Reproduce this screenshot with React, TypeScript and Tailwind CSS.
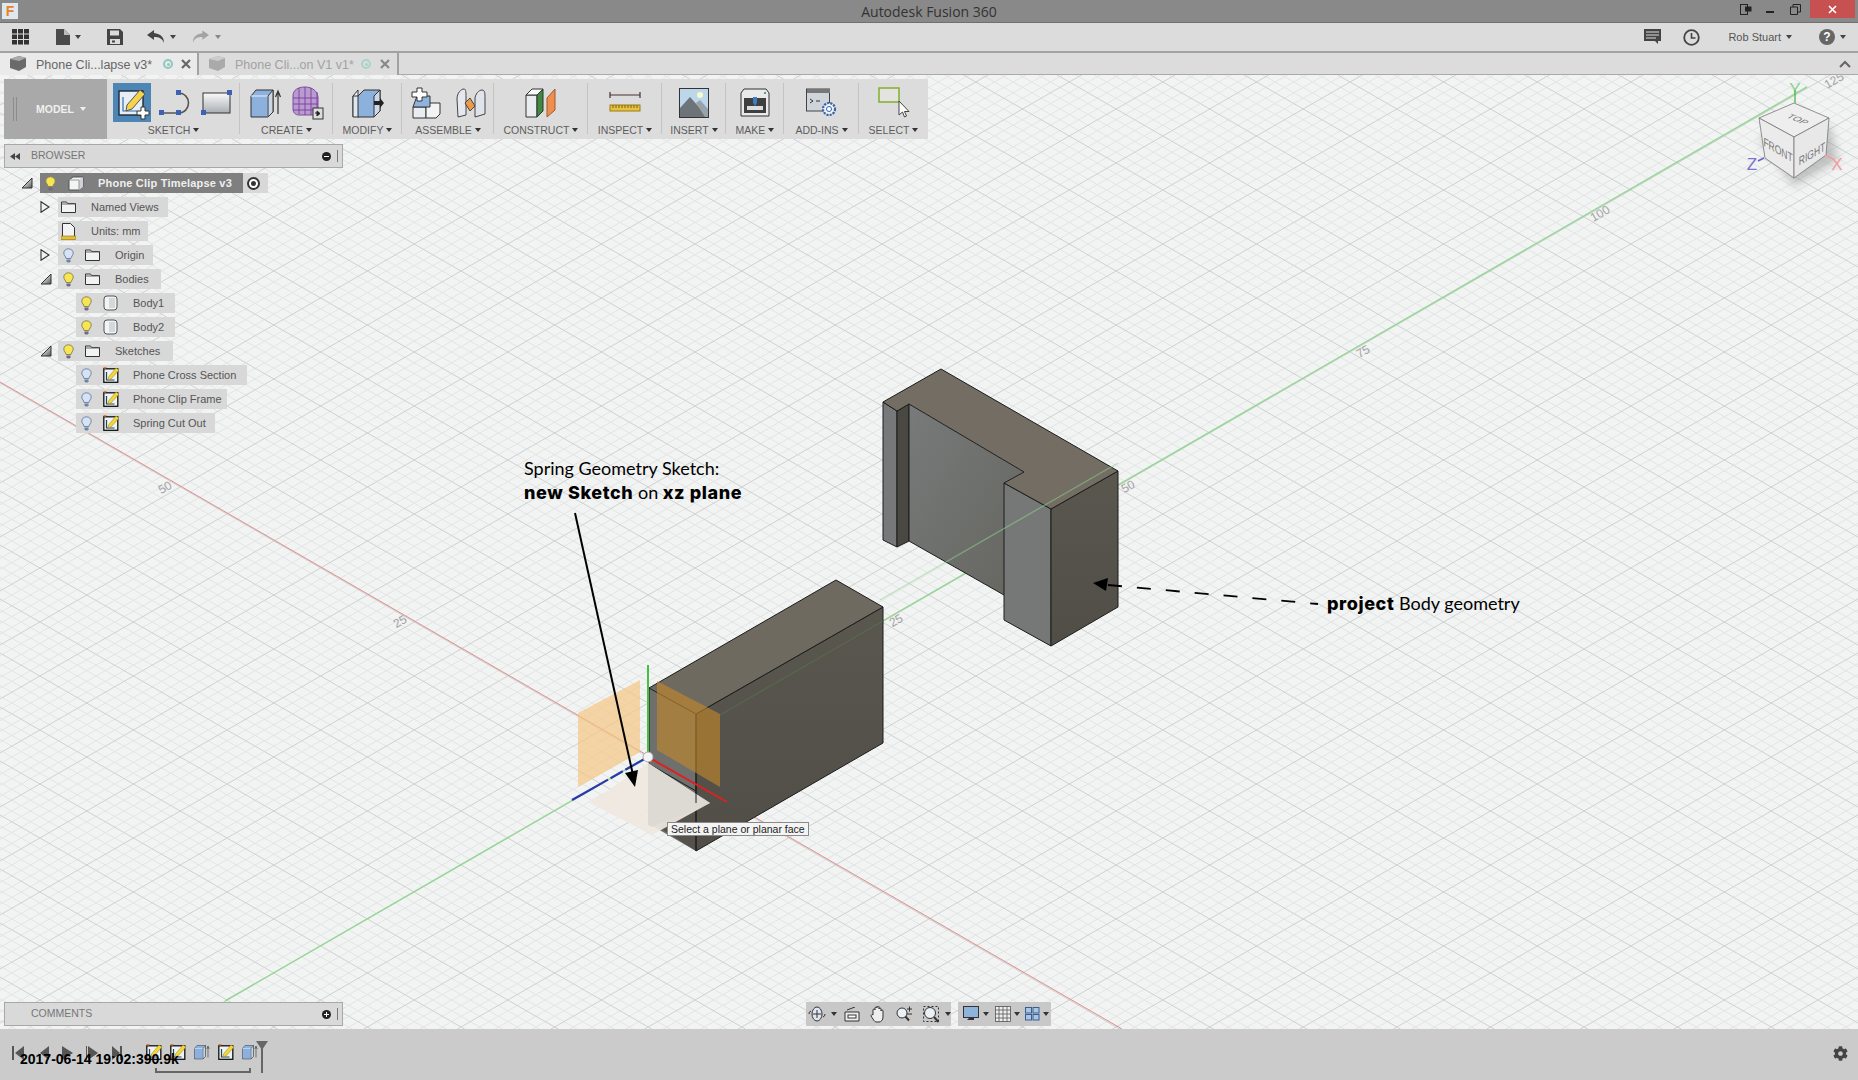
import React from 'react';
import { FaCog } from 'react-icons/fa';

const Caret = ({ className = 'border-t-[#444]' }: { className?: string }) => (
  <span className={`inline-block w-0 h-0 border-x-[3.5px] border-x-transparent border-t-[4px] ${className}`} />
);

// ---- ribbon icons ----
const SketchIcon = () => (
  <svg width="38" height="39" viewBox="0 0 38 39">
    <rect width="38" height="39" fill="#4d86b5" />
    <rect x="6" y="8" width="24" height="24" fill="#e8eef5" stroke="#1c2a3a" strokeWidth="1.4" />
    <path d="M10 14v14h14" fill="none" stroke="#2f6fb5" strokeWidth="1.2" />
    <path d="M14 22l13-15 5 4-13 15-6 2z" fill="#f5d34a" stroke="#555" strokeWidth="1" />
    <path d="M28 24h4v4h4v4h-4v4h-4v-4h-4v-4h4z" fill="#fff" stroke="#333" strokeWidth="1" />
  </svg>
);
const LineIcon = () => (
  <svg width="34" height="28" viewBox="0 0 34 28">
    <path d="M3 24h16c14 0 14-20 0-20" fill="none" stroke="#555" strokeWidth="1.6" />
    <g fill="#3e62b3">
      <rect x="0" y="21" width="5" height="5" />
      <rect x="17" y="21" width="5" height="5" />
      <rect x="17" y="1" width="5" height="5" />
    </g>
  </svg>
);
const RectIcon = () => (
  <svg width="32" height="26" viewBox="0 0 32 26">
    <defs>
      <linearGradient id="rg" x1="0" y1="0" x2="0" y2="1">
        <stop offset="0" stopColor="#fafafa" />
        <stop offset="1" stopColor="#a9aeb4" />
      </linearGradient>
    </defs>
    <rect x="2" y="3" width="27" height="20" fill="url(#rg)" stroke="#333" />
    <rect x="26" y="0" width="5" height="5" fill="#3e62b3" />
    <rect x="0" y="20" width="5" height="5" fill="#3e62b3" />
  </svg>
);
const ExtrudeIcon = ({ w = 32, h = 32 }: { w?: number; h?: number }) => (
  <svg width={w} height={h} viewBox="0 0 32 32">
    <path d="M1 9l5-6h17v22l-5 5H1z" fill="#8db1dd" stroke="#333" />
    <path d="M1 9h17v21" fill="none" stroke="#eef" />
    <path d="M18 9l5-6v22l-5 5z" fill="#c9d6e6" stroke="#333" />
    <path d="M28 27V6M25.500 10L28 4l2.500 6" fill="none" stroke="#333" strokeWidth="1.2" />
  </svg>
);
const FormIcon = () => (
  <svg width="32" height="34" viewBox="0 0 32 34">
    <path d="M1 10c0-6 5-9 12-9s13 4 13 11v13c0 3-2 4-5 4H7c-4 0-6-3-6-6z" fill="#b99bd0" stroke="#7a4c9b" />
    <path d="M1 12h25M1 18h25M1 24h24M7 2v26M13 1v28M19 2v27M25 6v22" stroke="#7a3f9e" strokeWidth="0.9" fill="none" />
    <rect x="21" y="22" width="10" height="11" fill="#ddd" stroke="#333" />
    <path d="M23 27h4M25 25l3 2.500-3 2.500z" fill="#222" stroke="#222" />
  </svg>
);
const ModifyIcon = () => (
  <svg width="32" height="32" viewBox="0 0 32 32">
    <path d="M1 9l5-6v22l-5 5z" fill="#eef1f4" stroke="#333" />
    <path d="M1 9h6v21H1z" fill="#dfe6ee" stroke="#333" />
    <path d="M6 9l6-6h16v21l-6 6H6z" fill="#8db1dd" stroke="#333" />
    <path d="M22 9l6-6v21l-6 6z" fill="#cdd9e8" stroke="#333" />
    <path d="M22 14h6v-3l4 5-4 5v-3h-6z" fill="#222" />
  </svg>
);
const AssembleIcon = () => (
  <svg width="30" height="32" viewBox="0 0 30 32">
    <path d="M2 20h13v11H2z" fill="#e9edf1" stroke="#333" />
    <path d="M15 20l4-4h10v11l-4 4H15z" fill="#f1f3f5" stroke="#333" />
    <path d="M6 9h13v11H2z" fill="#8fb3dc" stroke="#333" />
    <path d="M6 1h5v4h5v5h-5v4H6v-4H1V5h5z" fill="#fff" stroke="#333" />
  </svg>
);
const JointIcon = () => (
  <svg width="30" height="32" viewBox="0 0 30 32">
    <path d="M1 12c0-6 4-10 7-10 2 0 2 4 2 8v18l-8 2z" fill="#e5e8ec" stroke="#444" />
    <path d="M19 12c0-5 4-9 7-9s3 4 3 8v16l-10 3z" fill="#dfe4ea" stroke="#444" />
    <path d="M9 16l5-5 5 8-5 5z" fill="#ef9a4a" stroke="#444" />
  </svg>
);
const ConstructIcon = () => (
  <svg width="32" height="30" viewBox="0 0 32 30">
    <path d="M1 7h11v22H1z" fill="#e9edf0" stroke="#333" />
    <path d="M1 7l6-6h11l-6 6z" fill="#fafafa" stroke="#333" />
    <path d="M12 7l6-6v22l-6 6z" fill="#3f8a40" stroke="#333" />
    <path d="M22 10l8-9v21l-8 7z" fill="#ee8e4f" stroke="#a35a2a" />
  </svg>
);
const InspectIcon = () => (
  <svg width="32" height="24" viewBox="0 0 32 24">
    <path d="M1 1v6M31 1v6M1 4h30" stroke="#4a3030" strokeWidth="1.2" fill="none" />
    <rect x="1" y="14" width="30" height="6" fill="#e8c23a" stroke="#9a7d1a" />
    <path d="M4 14v3M7 14v3M10 14v3M13 14v3M16 14v3M19 14v3M22 14v3M25 14v3M28 14v3" stroke="#7a611a" />
  </svg>
);
const InsertIcon = () => (
  <svg width="30" height="30" viewBox="0 0 30 30">
    <rect x="0.500" y="0.500" width="29" height="29" fill="#bcd6ea" stroke="#333" />
    <circle cx="21" cy="7" r="3" fill="#fbf7cf" />
    <path d="M1 29V20L11 9l8 9 10 11z" fill="#6e7378" />
    <path d="M17 15l4-3 8 9v8h-3z" fill="#9aa3a9" />
  </svg>
);
const MakeIcon = () => (
  <svg width="30" height="29" viewBox="0 0 30 29">
    <path d="M4 1h22l3 4v23H1V5z" fill="#eaeaea" stroke="#333" />
    <rect x="4" y="10" width="22" height="15" fill="#3f3f3f" />
    <rect x="7" y="18" width="16" height="4" fill="#ddd" />
    <path d="M13 9h4v6l-2 3-2-3z" fill="#3e7cc4" />
    <circle cx="25" cy="5" r="1" fill="#2f8f3f" />
  </svg>
);
const AddInsIcon = () => (
  <svg width="31" height="29" viewBox="0 0 31 29">
    <rect x="0.500" y="1" width="23" height="22" fill="#cfd4db" stroke="#444" />
    <rect x="1" y="1" width="23" height="4" fill="#777" />
    <path d="M4 11l3 2-3 2M10 13h4" stroke="#333" fill="none" />
    <circle cx="23" cy="21" r="6" fill="#eef3fa" stroke="#3a62a8" strokeWidth="2.200" strokeDasharray="2.200 1" />
    <circle cx="23" cy="21" r="2.500" fill="#fff" stroke="#3a62a8" />
  </svg>
);
const SelectIcon = () => (
  <svg width="32" height="31" viewBox="0 0 32 31">
    <rect x="1" y="1" width="20" height="14" fill="#e3e4e0" stroke="#86ad2f" strokeWidth="1.500" />
    <path d="M21 14v14l3.500-3 2 5 2-1-2-4.500H31z" fill="#fff" stroke="#444" />
  </svg>
);

const ToolGroup = ({ className, label, children, last }: { className: string; label: string; children: React.ReactNode; last?: boolean }) => (
  <div className={`h-full flex flex-col items-center relative ${className}`}>
    <div className="h-[44px] pt-[3px] flex items-center justify-center w-full">{children}</div>
    <div className="flex items-center gap-[3px] text-[10.5px] leading-[12px] text-[#5c5c5c] pt-px">
      {label}
      <Caret className="border-t-[#333]" />
    </div>
    {!last && <div className="absolute right-0 top-[4px] bottom-[5px] w-px bg-[#c4c4c4]" />}
  </div>
);

// ---- browser icons ----
const Bulb = ({ on = false }: { on?: boolean }) => (
  <svg width="11" height="15" viewBox="0 0 11 15">
    <path d="M5.500 0.800c2.700 0 4.700 1.900 4.700 4.300 0 2.200-2 3.400-2.300 5.400H3.100C2.800 8.500 0.800 7.300 0.800 5.100 0.800 2.700 2.800 0.800 5.500 0.800z" fill={on ? '#f7e652' : '#d5e3f4'} stroke={on ? '#8a8458' : '#6f84a5'} />
    <path d="M3.500 11.500h4v2l-1 1h-2l-1-1z" fill={on ? '#6f6a80' : '#6f84a5'} />
  </svg>
);
const Folder = () => (
  <svg width="15" height="12" viewBox="0 0 15 12">
    <path d="M0.500 1h5l1 1.500h8v9h-14z" fill="#f2f3f4" stroke="#333" />
    <path d="M0.500 3h14" stroke="#666" />
  </svg>
);
const UnitsIcon = () => (
  <svg width="15" height="17" viewBox="0 0 15 17">
    <path d="M1.500 0.500h8l4 4v9h-12z" fill="#f2f3f4" stroke="#333" />
    <rect x="0" y="13" width="15" height="3.500" fill="#e3bf35" stroke="#8a6f1a" strokeWidth="0.600" />
  </svg>
);
const BodyIcon = () => (
  <svg width="16" height="16" viewBox="0 0 16 16">
    <rect x="1" y="1" width="13" height="14" rx="3" fill="#f2f3f4" stroke="#555" />
    <path d="M6 3h6v10H6z" fill="#d3d8dd" />
  </svg>
);
const SketchMini = () => (
  <svg width="16" height="16" viewBox="0 0 16 16">
    <rect x="0.800" y="1.800" width="14" height="13.500" fill="#eef3f8" stroke="#111" strokeWidth="1.300" />
    <path d="M3.500 5v8h8" fill="none" stroke="#245" strokeWidth="1.200" />
    <path d="M5.500 10L13 1l3 2-8 9-3 1z" fill="#f5d834" stroke="#8a7a20" strokeWidth="0.500" />
    <path d="M0 0h4l-2 2z" fill="#e67a3a" />
  </svg>
);
const RootCube = () => (
  <svg width="16" height="15" viewBox="0 0 16 15">
    <path d="M1 4l4-3h10v10l-4 3H1z" fill="#f3f4f5" stroke="#555" />
    <path d="M11 4l4-3v10l-4 3z" fill="#cfd3d8" />
    <path d="M1 4h10v10" fill="none" stroke="#999" />
  </svg>
);
const Expander = ({ open }: { open: boolean }) =>
  open ? (
    <svg width="12" height="12" viewBox="0 0 12 12">
      <defs>
        <linearGradient id="ex" x1="0" y1="0" x2="1" y2="1">
          <stop offset="0.300" stopColor="#e6e6e6" />
          <stop offset="1" stopColor="#555" />
        </linearGradient>
      </defs>
      <path d="M1 11L11 1v10z" fill="url(#ex)" stroke="#333" />
    </svg>
  ) : (
    <svg width="10" height="12" viewBox="0 0 10 12">
      <path d="M1 0.700l8 5.300-8 5.300z" fill="#f2f2f2" stroke="#333" strokeWidth="1.100" />
    </svg>
  );

type Row = {
  label: string;
  indent: string;
  width: string;
  bulb?: 'on' | 'off';
  icon: React.ReactNode;
  expander?: boolean;
};

const rows: Row[] = [
  { label: 'Named Views', indent: 'ml-[58px]', width: 'w-[110px]', icon: <Folder />, expander: false },
  { label: 'Units: mm', indent: 'ml-[58px]', width: 'w-[90px]', icon: <UnitsIcon /> },
  { label: 'Origin', indent: 'ml-[58px]', width: 'w-[95px]', bulb: 'off', icon: <Folder />, expander: false },
  { label: 'Bodies', indent: 'ml-[58px]', width: 'w-[103px]', bulb: 'on', icon: <Folder />, expander: true },
  { label: 'Body1', indent: 'ml-[76px]', width: 'w-[99px]', bulb: 'on', icon: <BodyIcon /> },
  { label: 'Body2', indent: 'ml-[76px]', width: 'w-[99px]', bulb: 'on', icon: <BodyIcon /> },
  { label: 'Sketches', indent: 'ml-[58px]', width: 'w-[115px]', bulb: 'on', icon: <Folder />, expander: true },
  { label: 'Phone Cross Section', indent: 'ml-[76px]', width: 'w-[171px]', bulb: 'off', icon: <SketchMini /> },
  { label: 'Phone Clip Frame', indent: 'ml-[76px]', width: 'w-[151px]', bulb: 'off', icon: <SketchMini /> },
  { label: 'Spring Cut Out', indent: 'ml-[76px]', width: 'w-[139px]', bulb: 'off', icon: <SketchMini /> },
];

const TreeRow = ({ row }: { row: Row }) => (
  <div className="h-[24px] relative flex items-center">
    {row.expander !== undefined && (
      <span className="absolute left-[40px] top-[6px] flex">
        <Expander open={row.expander} />
      </span>
    )}
    <div className={`h-[20px] bg-[#d8d8d8] flex items-center text-[11px] text-[#555] ${row.indent} ${row.width}`}>
      {row.bulb && (
        <span className="w-[24px] pl-[5px] flex shrink-0">
          <Bulb on={row.bulb === 'on'} />
        </span>
      )}
      <span className="w-[33px] pl-[3px] flex shrink-0">{row.icon}</span>
      <span className="whitespace-nowrap">{row.label}</span>
    </div>
  </div>
);

const PanelHeader = ({ title, collapsed, children }: { title: string; collapsed?: boolean; children?: React.ReactNode }) => (
  <div className="w-[339px] h-[24px] bg-[#d9d9d9] border border-[#a8a8a8] flex items-center pr-[2px] text-[10.5px] text-[#777]">
    <span className="w-[26px] flex items-center pl-[5px] shrink-0">{children}</span>
    <span className="flex-1">{title}</span>
    <span className="w-[9px] h-[9px] rounded-full bg-[#222] flex items-center justify-center mr-[6px] relative">
      <span className="block w-[5px] h-px bg-white" />
      {collapsed && <span className="absolute left-[4px] top-[2px] block w-px h-[5px] bg-white" />}
    </span>
    <span className="w-px h-[12px] bg-[#777] mr-[2px]" />
  </div>
);

// ---- 3D scene, drawn in page coordinates ----
const gridLines = (slope: number, c0: number, major: boolean) => {
  let d = '';
  for (let k = -300; k <= 300; k++) {
    if ((k % 5 === 0) !== major) continue;
    const c = c0 + k * 10.8;
    d += `M0 ${c.toFixed(1)}L1858 ${(c + slope * 1858).toFixed(1)}`;
  }
  return d;
};

const Scene = () => (
  <svg className="absolute inset-0 w-full h-full" viewBox="0 75 1858 954">
    <defs>
      <linearGradient id="rf1" x1="0" y1="0" x2="0" y2="1">
        <stop offset="0" stopColor="#5a574f" />
        <stop offset="1" stopColor="#504e47" />
      </linearGradient>
      <linearGradient id="wall" x1="0" y1="0" x2="1" y2="1">
        <stop offset="0" stopColor="#787a7b" />
        <stop offset="1" stopColor="#65665f" />
      </linearGradient>
      <filter id="soft"><feGaussianBlur stdDeviation="5" /></filter>
    </defs>
    <path d={gridLines(0.577, 383, false)} stroke="#e3e4e4" strokeWidth="1" fill="none" />
    <path d={gridLines(-0.577, 1131, false)} stroke="#e3e4e4" strokeWidth="1" fill="none" />
    <path d={gridLines(0.577, 383, true)} stroke="#cfd0d0" strokeWidth="1" fill="none" />
    <path d={gridLines(-0.577, 1131, true)} stroke="#cfd0d0" strokeWidth="1" fill="none" />

    <line x1="225" y1="1001" x2="1807" y2="87" stroke="#96d696" strokeWidth="1.500" />
    <line x1="0" y1="382" x2="1122" y2="1029" stroke="#dd8e8e" strokeWidth="1" />

    <g fill="#a2a2a2" fontSize="12" fontFamily="Liberation Sans, sans-serif" textAnchor="middle">
      <text transform="translate(167 491) rotate(-30)">50</text>
      <text transform="translate(402 625) rotate(-30)">25</text>
      <text transform="translate(898 624) rotate(-30)">25</text>
      <text transform="translate(1130 490) rotate(-30)">50</text>
      <text transform="translate(1365 355) rotate(-30)">75</text>
      <text transform="translate(1602 217) rotate(-30)">100</text>
      <text transform="translate(1836 84) rotate(-30)">125</text>
    </g>

    {/* far body */}
    <g stroke="#1c1c1c" strokeWidth="1" strokeLinejoin="round">
      <polygon points="883,402 897,411 897,547 883,540" fill="#76787a" />
      <polygon points="897,411 909,404 909,541 897,547" fill="#4a4843" />
      <polygon points="909,404 1024,472 1004,483 1004,595 909,541" fill="url(#wall)" stroke="none" />
      <polygon points="1004,483 1051,509 1051,646 1004,620" fill="#767878" />
      <polygon points="1118,471 1051,509 1051,646 1118,607" fill="url(#rf1)" />
      <polygon points="941,369 1118,471 1051,509 1004,483 1024,472 909,404 897,411 883,402" fill="#736d63" />
      <path d="M909 404v137l95 54" fill="none" />
    </g>
    <line x1="880" y1="600" x2="1118" y2="463" stroke="#8fd48f" strokeWidth="1.200" opacity="0.550" />

    {/* near body */}
    <g stroke="#1c1c1c" strokeWidth="1" strokeLinejoin="round">
      <polygon points="649,688 696,714 696,851 649,824" fill="#6f6f6d" stroke="none" />
      <polygon points="660,828 696,851 696,805 672,816" fill="#55524c" stroke="none" />
      <polygon points="883,607 696,714 696,851 883,743" fill="url(#rf1)" />
      <polygon points="836,580 883,607 696,714 649,688" fill="#6f6a60" />
      <path d="M649 688v76l47 27M696 714v137" fill="none" />
    </g>
    <line x1="720" y1="715" x2="883" y2="621" stroke="#567a4c" strokeWidth="1" opacity="0.700" />

    {/* xz plane preview */}
    <polygon points="578,713 640,680 640,752 578,787" fill="#f5c67f" opacity="0.680" />
    <polygon points="657,681 720,714 720,787 657,750" fill="#c4882a" opacity="0.620" />
    <polygon points="648,763 710,803 652,835 590,803" fill="#f0e8e1" opacity="0.920" />
    <polygon points="648,763 710,803 652,827 648,825" fill="#dcd8d3" opacity="0.950" />
    <line x1="696" y1="785" x2="696" y2="803" stroke="#222" strokeWidth="1" />

    <line x1="648" y1="665" x2="648" y2="757" stroke="#45c045" strokeWidth="2" />
    <line x1="648" y1="757" x2="727" y2="802" stroke="#e02020" strokeWidth="2" />
    <line x1="648" y1="757" x2="572" y2="800" stroke="#2a3aa8" strokeWidth="2.200" strokeDasharray="26 3 14 3 30 0" />
    <circle cx="648" cy="757" r="5" fill="#f4f4f4" stroke="#aaa" />

    {/* annotation arrows */}
    <line x1="575" y1="513" x2="633" y2="775" stroke="#000" strokeWidth="2" />
    <polygon points="625,773 638,770 635,787" fill="#000" />
    <line x1="1108" y1="585" x2="1318" y2="604" stroke="#000" strokeWidth="1.800" strokeDasharray="14 15" />
    <polygon points="1093,583 1108,578 1106,591" fill="#000" />

    {/* view cube */}
    <polygon points="1759,138 1794,186 1838,160 1830,125" fill="#8c8c8c" opacity="0.500" filter="url(#soft)" />
    <polygon points="1794,103 1829,118 1794,137 1759,118" fill="#eeeeee" stroke="#777" strokeWidth="0.800" />
    <polygon points="1759,118 1794,137 1794,178 1765,158" fill="#ebebeb" stroke="#777" strokeWidth="0.800" />
    <polygon points="1829,118 1794,137 1794,178 1826,155" fill="#e8e8e8" stroke="#777" strokeWidth="0.800" />
    <g fill="#777" fontSize="10" fontFamily="Liberation Sans, sans-serif" textAnchor="middle">
      <text transform="matrix(0.9 0.4 -0.8 0.5 1795 121)">TOP</text>
      <text transform="matrix(0.85 0.5 0 1.2 1778 154)">FRONT</text>
      <text transform="matrix(0.85 -0.5 0 1.2 1812 158)">RIGHT</text>
    </g>
    <g fontSize="17" fontFamily="Liberation Sans, sans-serif" textAnchor="middle">
      <text x="1795" y="95" fill="#8ed08e">Y</text>
      <text x="1837" y="170" fill="#ef9c9c">X</text>
      <text x="1752" y="170" fill="#7c74d0">Z</text>
    </g>
    <path d="M1795 103V90" stroke="#5cc05c" strokeWidth="1.500" />
    <path d="M1825 155l8 4" stroke="#ef9c9c" strokeWidth="1.500" />
    <path d="M1764 158l-6 3" stroke="#6a60c8" strokeWidth="1.500" />
  </svg>
);

const Annotation = ({ className, children }: { className: string; children: React.ReactNode }) => (
  <div className={`absolute whitespace-nowrap text-[18px] leading-[24px] text-black font-['Lato',sans-serif] ${className}`}>
    {children}
  </div>
);

const AnnotationBold = ({ children }: { children: React.ReactNode }) => (
  <b className="font-['Inter',sans-serif] font-extrabold text-[18px] tracking-[0.6px]">{children}</b>
);

export default function App() {
  return (
    <div className="w-[1858px] h-[1080px] flex flex-col overflow-hidden font-['Liberation_Sans',Arial,sans-serif] bg-[#f2f3f3]">
      {/* title bar */}
      <div className="h-[23px] shrink-0 bg-[#898989] border-b border-[#707070] grid grid-cols-[1fr_auto_1fr] items-center">
        <div className="pl-[2px]">
          <div className="w-[16px] h-[16px] bg-[#dfe8ee] flex items-center justify-center text-[14px] leading-none font-bold text-[#e8822a]">F</div>
        </div>
        <div className="text-[14px] pt-px text-[#333] font-['Open_Sans',sans-serif]">Autodesk Fusion 360</div>
        <div className="flex justify-end items-start h-full pr-[3px]">
          <svg className="mt-[4px]" width="12" height="11" viewBox="0 0 12 11">
            <rect x="0.500" y="0.500" width="7" height="10" fill="none" stroke="#222" />
            <rect x="5" y="2.500" width="6.500" height="5" fill="#222" />
          </svg>
          <div className="w-[8px] h-[2px] bg-[#222] mt-[11px] ml-[14px]" />
          <svg className="mt-[4px] ml-[16px]" width="11" height="11" viewBox="0 0 11 11">
            <path d="M0.500 3h7v7.500h-7zM3 3V0.500h7.500V8H8" fill="none" stroke="#222" />
          </svg>
          <div className="w-[45px] h-[18px] bg-[#c75050] ml-[9px] flex items-center justify-center">
            <svg width="9" height="9" viewBox="0 0 9 9">
              <path d="M1 1l7 7M8 1L1 8" stroke="#fff" strokeWidth="1.600" />
            </svg>
          </div>
        </div>
      </div>

      {/* quick access toolbar */}
      <div className="h-[28px] shrink-0 bg-[#dcdcdc] flex items-center text-[#444]">
        <svg className="ml-[12px]" width="17" height="16" viewBox="0 0 17 16" fill="#333">
          {[0, 6, 12].map((x) => [0, 5.500, 11].map((y) => <rect key={`${x}-${y}`} x={x} y={y} width="5" height="4.500" />))}
        </svg>
        <svg className="ml-[27px]" width="14" height="16" viewBox="0 0 14 16">
          <path d="M0 0h8l6 6v10H0z" fill="#4a4a4a" />
          <path d="M8 0v6h6" fill="#bbb" />
        </svg>
        <span className="ml-[5px] flex"><Caret /></span>
        <svg className="ml-[26px]" width="16" height="16" viewBox="0 0 16 16">
          <path d="M0 0h13l3 3v13H0z" fill="#444" />
          <rect x="3" y="1.500" width="9" height="5" fill="#dcdcdc" />
          <rect x="3" y="10" width="10" height="5" fill="#dcdcdc" />
          <rect x="5" y="11.500" width="3" height="2" fill="#444" />
        </svg>
        <svg className="ml-[24px]" width="18" height="14" viewBox="0 0 18 14">
          <path d="M7 0L0 5l7 5V7c5 0 8 1 10 6 0-6-3-9-10-10z" fill="#444" />
        </svg>
        <span className="ml-[5px] flex"><Caret /></span>
        <svg className="ml-[16px]" width="17" height="14" viewBox="0 0 18 14">
          <path d="M11 0l7 5-7 5V7C6 7 3 8 1 13 1 7 4 4 11 3z" fill="#a3a3a3" />
        </svg>
        <span className="ml-[6px] flex"><Caret className="border-t-[#888]" /></span>
        <div className="flex-1" />
        <svg width="17" height="16" viewBox="0 0 17 16">
          <path d="M0 0h17v12h-3v3l-3-3H0z" fill="#444" />
          <path d="M2 3h13M2 6h13M2 9h10" stroke="#dcdcdc" />
        </svg>
        <svg className="ml-[22px]" width="17" height="17" viewBox="0 0 17 17">
          <circle cx="8.500" cy="8.500" r="7.300" fill="none" stroke="#444" strokeWidth="1.800" />
          <path d="M8.500 4v5h4" fill="none" stroke="#444" strokeWidth="1.600" />
        </svg>
        <span className="ml-[28px] text-[11px] text-[#555]">Rob Stuart</span>
        <span className="ml-[5px] flex"><Caret /></span>
        <span className="ml-[27px] w-[16px] h-[16px] rounded-full bg-[#666] text-white text-[12px] font-bold leading-none flex items-center justify-center">?</span>
        <span className="ml-[5px] mr-[12px] flex"><Caret /></span>
      </div>

      {/* document tabs */}
      <div className="h-[24px] shrink-0 border-t-2 border-b border-t-[#a2a2a2] border-b-[#aaa] bg-[#dcdcdc] flex text-[12.5px]">
        <div className="w-[199px] h-[22px] bg-[#eaeaea] border-r-2 border-[#a2a2a2] flex items-center text-[#666] relative">
          <svg className="ml-[10px] mb-[2px]" width="16" height="15" viewBox="0 0 16 15">
            <path d="M0 3l9-3 7 2v9l-7 4-9-3z" fill="#6a6a6a" />
            <path d="M0 3l9 2 7-3-7-2z" fill="#aaa" />
          </svg>
          <span className="ml-[10px] w-[127px] whitespace-nowrap pt-[2px]">Phone Cli...lapse v3*</span>
          <span className="w-[10px] h-[10px] rounded-full border-2 border-[#8fc8bd] flex items-center justify-center"><span className="block w-[3px] h-[3px] rounded-full bg-[#8fc8bd]" /></span>
          <svg className="ml-[8px]" width="10" height="10" viewBox="0 0 10 10"><path d="M1 1l8 8M9 1L1 9" stroke="#666" strokeWidth="2.200" /></svg>
        </div>
        <div className="w-[200px] h-[22px] bg-[#dcdcdc] border-r-2 border-[#a2a2a2] flex items-center text-[#a2a2a2] relative">
          <svg className="ml-[10px] mb-[2px]" width="16" height="15" viewBox="0 0 16 15">
            <path d="M0 3l9-3 7 2v9l-7 4-9-3z" fill="#aaa" />
            <path d="M0 3l9 2 7-3-7-2z" fill="#ccc" />
          </svg>
          <span className="ml-[10px] w-[126px] whitespace-nowrap pt-[2px]">Phone Cli...on V1 v1*</span>
          <span className="w-[10px] h-[10px] rounded-full border-2 border-[#a8d4cb] flex items-center justify-center"><span className="block w-[3px] h-[3px] rounded-full bg-[#a8d4cb]" /></span>
          <svg className="ml-[9px]" width="10" height="10" viewBox="0 0 10 10"><path d="M1 1l8 8M9 1L1 9" stroke="#888" strokeWidth="2.200" /></svg>
        </div>
        <div className="flex-1 flex justify-end items-center pr-[7px]">
          <svg width="12" height="8" viewBox="0 0 12 8"><path d="M1 7l5-5 5 5" fill="none" stroke="#666" strokeWidth="2" /></svg>
        </div>
      </div>

      {/* canvas */}
      <div className="flex-1 relative overflow-hidden">
        <Scene />

        {/* ribbon */}
        <div className="absolute left-[4px] top-[4px] h-[60px] flex bg-[#dcdcdc]">
          <div className="w-[103px] h-full bg-[#a9a9a9] flex items-center relative pt-px">
            <span className="absolute left-[9px] top-[18px] w-[4px] h-[24px] border-x border-[#8c8c8c]" />
            <span className="ml-[32px] text-[10.5px] font-bold text-[#f0f0f0]">MODEL</span>
            <span className="ml-[6px] flex mb-[2px]"><Caret className="border-t-[#f0f0f0]" /></span>
          </div>
          <ToolGroup className="w-[133px]" label="SKETCH">
            <div className="flex items-center gap-[8px] ml-[-1px]"><SketchIcon /><LineIcon /><RectIcon /></div>
          </ToolGroup>
          <ToolGroup className="w-[93px]" label="CREATE">
            <div className="flex items-center gap-[10px]"><ExtrudeIcon /><FormIcon /></div>
          </ToolGroup>
          <ToolGroup className="w-[69px]" label="MODIFY"><ModifyIcon /></ToolGroup>
          <ToolGroup className="w-[92px]" label="ASSEMBLE">
            <div className="flex items-center gap-[15px]"><AssembleIcon /><JointIcon /></div>
          </ToolGroup>
          <ToolGroup className="w-[94px]" label="CONSTRUCT"><ConstructIcon /></ToolGroup>
          <ToolGroup className="w-[74px]" label="INSPECT"><InspectIcon /></ToolGroup>
          <ToolGroup className="w-[64px]" label="INSERT"><InsertIcon /></ToolGroup>
          <ToolGroup className="w-[58px]" label="MAKE"><MakeIcon /></ToolGroup>
          <ToolGroup className="w-[75px]" label="ADD-INS"><AddInsIcon /></ToolGroup>
          <ToolGroup className="w-[69px]" label="SELECT" last><SelectIcon /></ToolGroup>
        </div>

        {/* browser */}
        <div className="absolute left-[4px] top-[69px]">
          <PanelHeader title="BROWSER">
            <svg width="10" height="7" viewBox="0 0 10 7" fill="#444"><path d="M5 0v7L0 3.500zM10 0v7L5 3.500z" /></svg>
          </PanelHeader>
        </div>
        <div className="absolute left-0 top-[96px] w-[300px]">
          <div className="h-[24px] relative flex items-center">
            <span className="absolute left-[21px] top-[6px] flex"><Expander open /></span>
            <div className="ml-[40px] w-[228px] h-[20px] bg-[#d8d8d8] flex items-center">
              <div className="w-[203px] h-full bg-[#7f7f7f] flex items-center text-[11px] font-bold tracking-[0.2px] text-[#efefef]">
                <span className="w-[28px] pl-[5px] flex shrink-0"><Bulb on /></span>
                <span className="w-[30px] flex shrink-0"><RootCube /></span>
                <span className="whitespace-nowrap">Phone Clip Timelapse v3</span>
              </div>
              <span className="ml-[4px] w-[13px] h-[13px] rounded-full border-2 border-[#333] bg-white flex items-center justify-center">
                <span className="block w-[5px] h-[5px] rounded-full bg-[#333]" />
              </span>
            </div>
          </div>
          {rows.map((row) => (
            <TreeRow key={row.label} row={row} />
          ))}
        </div>

        {/* annotations */}
        <Annotation className="left-[524px] top-[381px]">Spring Geometry Sketch:</Annotation>
        <Annotation className="left-[524px] top-[405px]">
          <AnnotationBold>new Sketch</AnnotationBold> on <AnnotationBold>xz plane</AnnotationBold>
        </Annotation>
        <Annotation className="left-[1327px] top-[516px]">
          <AnnotationBold>project</AnnotationBold> Body geometry
        </Annotation>

        {/* tooltip */}
        <div className="absolute left-[667px] top-[747px] h-[14px] px-[3px] bg-[#f4f4f4] border border-[#8a8a8a] text-[10.5px] leading-[12px] text-[#222] whitespace-nowrap">
          Select a plane or planar face
        </div>

        {/* comments */}
        <div className="absolute left-[4px] bottom-[3px]">
          <PanelHeader title="COMMENTS" collapsed />
        </div>

        {/* navigation bar */}
        <div className="absolute left-[806px] bottom-[3px] h-[24px] flex gap-[7px]">
          <div className="w-[145px] h-full bg-[#c8c8c8] flex items-center pl-[2px]">
            <svg width="18" height="18" viewBox="0 0 18 18" fill="none" stroke="#333">
              <ellipse cx="9" cy="9" rx="5" ry="7" fill="#dfe8f2" />
              <path d="M1 9a3 3 0 0 1 2-3M17 9a3 3 0 0 1-2 3M5 9h8M9 5v8" />
            </svg>
            <span className="ml-[5px] flex"><Caret className="border-t-[#333]" /></span>
            <svg className="ml-[7px]" width="16" height="15" viewBox="0 0 16 15" fill="none" stroke="#333">
              <path d="M3 3l8-3M1 5h14v9H1z" fill="#eee" />
              <rect x="4" y="8" width="8" height="3" fill="#fff" />
            </svg>
            <svg className="ml-[10px]" width="16" height="17" viewBox="0 0 16 17" fill="#eee" stroke="#333">
              <path d="M3 9V4a1 1 0 0 1 2 0V2a1 1 0 0 1 2 0v-1a1 1 0 0 1 2 0v2a1 1 0 0 1 2 0v2a1 1 0 0 1 2 0v6c0 3-2 5-4 5H7c-2 0-3-1-4-3l-2-3c0-1 1-2 2-1z" />
            </svg>
            <svg className="ml-[10px]" width="17" height="16" viewBox="0 0 17 16" fill="none" stroke="#333">
              <circle cx="6" cy="7" r="5" fill="#e9f0f6" />
              <path d="M9.500 10.500l3.500 4" strokeWidth="2" />
              <path d="M11 3h5M13.500 .5v5M11 8h5" />
            </svg>
            <svg className="ml-[10px]" width="17" height="17" viewBox="0 0 17 17" fill="none" stroke="#333">
              <rect x="0.500" y="0.500" width="15" height="15" strokeDasharray="2 2" />
              <circle cx="7" cy="7" r="5.500" fill="#e9f0f6" />
              <path d="M11 11l4.500 5" strokeWidth="2" />
            </svg>
            <span className="ml-[5px] flex"><Caret className="border-t-[#333]" /></span>
          </div>
          <div className="w-[93px] h-full bg-[#c8c8c8] flex items-center pl-[5px]">
            <svg width="17" height="16" viewBox="0 0 17 16">
              <rect x="0.500" y="0.500" width="15" height="11" fill="#8fb4dc" stroke="#333" />
              <path d="M6 12h5v2H4z" fill="#333" />
            </svg>
            <span className="ml-[3px] flex"><Caret className="border-t-[#333]" /></span>
            <svg className="ml-[6px]" width="16" height="16" viewBox="0 0 16 16" fill="#eee" stroke="#555" strokeWidth="0.800">
              <rect x="0.500" y="0.500" width="15" height="15" />
              <path d="M4 0v16M8 0v16M12 0v16M0 4h16M0 8h16M0 12h16" />
            </svg>
            <span className="ml-[3px] flex"><Caret className="border-t-[#333]" /></span>
            <svg className="ml-[5px]" width="15" height="14" viewBox="0 0 15 14" fill="#a9c5e6" stroke="#3a5c90">
              <rect x="0.500" y="0.500" width="6" height="5.500" />
              <rect x="8" y="0.500" width="6" height="5.500" />
              <rect x="0.500" y="7.500" width="6" height="5.500" />
              <rect x="8" y="7.500" width="6" height="5.500" />
            </svg>
            <span className="ml-[3px] flex"><Caret className="border-t-[#333]" /></span>
          </div>
        </div>
      </div>

      {/* timeline */}
      <div className="h-[51px] shrink-0 bg-[#cbcbcb] relative flex items-center">
        <div className="flex items-center ml-[12px] mt-[-3px] text-[#555]">
          <svg width="110" height="14" viewBox="0 0 110 14" fill="#555">
            <path d="M0 0h2v14H0zM12 0v14L3 7z" />
            <path d="M37 0v14L28 7z" />
            <path d="M50 0l11 7-11 7z" />
            <path d="M76 0l10 7-10 7zM74 0h1v14h-1z" />
            <path d="M100 0l8 7-8 7zM108 0h2v14h-2z" />
          </svg>
        </div>
        <div className="ml-[24px] mt-[-5px] flex items-center gap-[8px]">
          <SketchMini />
          <SketchMini />
          <ExtrudeIcon w={16} h={16} />
          <SketchMini />
          <ExtrudeIcon w={16} h={16} />
        </div>
        <div className="absolute left-[155px] top-[39px] w-[96px] h-[5px] border-b-2 border-x-2 border-[#666]" />
        <div className="absolute left-[256px] top-[12px] w-0 h-0 border-x-[6px] border-x-transparent border-t-[9px] border-t-[#666]" />
        <div className="absolute left-[261px] top-[16px] w-[2px] h-[28px] bg-[#666]" />
        <div className="absolute left-[20px] top-[22px] text-[14px] leading-[16px] font-bold text-black whitespace-nowrap">2017-06-14 19:02:390.9k</div>
        <div className="flex-1" />
        <FaCog className="mr-[10px] mt-[-2px] text-[#444]" size={15} />
      </div>
    </div>
  );
}
